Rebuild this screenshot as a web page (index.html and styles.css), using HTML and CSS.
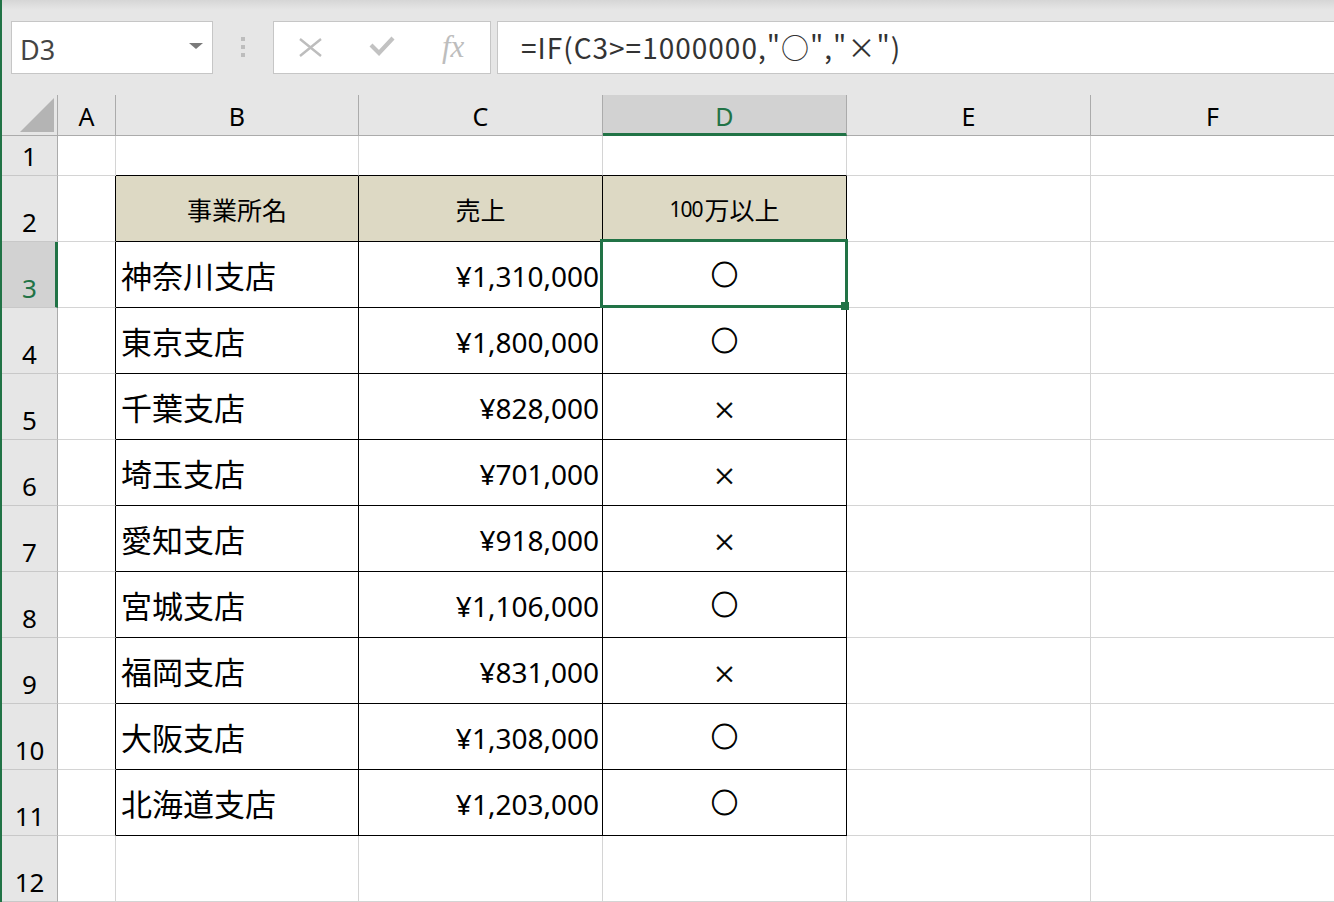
FILE: index.html
```html
<!DOCTYPE html>
<html lang="ja">
<head>
    <meta charset="UTF-8">
    <title>事業所別売上 - Excel</title>
    <link rel="stylesheet" href="styles.css">
</head>
<body>
    <div class="formula-bar">
        <div class="name-box">
            <span class="name-text">D3</span>
            <span class="name-arrow"></span>
        </div>
        <div class="grip"><span></span><span></span><span></span></div>
        <div class="fx-buttons">
            <svg class="fx-cancel" width="23" height="19" viewBox="0 0 23 19">
                <path d="M1 1 L22 18 M22 1 L1 18" stroke="#bdbdbd" stroke-width="2.4" fill="none"/>
            </svg>
            <svg class="fx-enter" width="26" height="21" viewBox="0 0 26 21">
                <path d="M2 10 L10 18 L24 3" stroke="#c2c2c2" stroke-width="4.2" fill="none"/>
            </svg>
            <span class="fx-label">fx</span>
        </div>
        <div class="formula-input">=IF(C3&gt;=1000000,"○","×")</div>
    </div>

    <div class="sheet">
        <!-- column headers -->
        <div class="corner">
            <svg width="56" height="40" viewBox="0 0 56 40"><polygon points="18,37 52,3 52,37" fill="#b4b4b4"/></svg>
        </div>
        <div class="col-head">A</div>
        <div class="col-head">B</div>
        <div class="col-head">C</div>
        <div class="col-head selected">D</div>
        <div class="col-head">E</div>
        <div class="col-head">F</div>

        <!-- row 1 -->
        <div class="row-head">1</div>
        <div class="cell"></div>
        <div class="cell top-edge"></div>
        <div class="cell top-edge"></div>
        <div class="cell top-edge"></div>
        <div class="cell"></div>
        <div class="cell"></div>

        <!-- row 2 -->
        <div class="row-head">2</div>
        <div class="cell left-edge"></div>
        <div class="tcell th">事業所名</div>
        <div class="tcell th">売上</div>
        <div class="tcell th"><span class="th-digits">100</span>万以上</div>
        <div class="cell"></div>
        <div class="cell"></div>

        <!-- row 3 -->
        <div class="row-head selected">3</div>
        <div class="cell left-edge"></div>
        <div class="tcell name">神奈川支店</div>
        <div class="tcell num">¥1,310,000</div>
        <div class="tcell mark active">○</div>
        <div class="cell"></div>
        <div class="cell"></div>

        <!-- row 4 -->
        <div class="row-head">4</div>
        <div class="cell left-edge"></div>
        <div class="tcell name">東京支店</div>
        <div class="tcell num">¥1,800,000</div>
        <div class="tcell mark">○</div>
        <div class="cell"></div>
        <div class="cell"></div>

        <!-- row 5 -->
        <div class="row-head">5</div>
        <div class="cell left-edge"></div>
        <div class="tcell name">千葉支店</div>
        <div class="tcell num">¥828,000</div>
        <div class="tcell mark cross">×</div>
        <div class="cell"></div>
        <div class="cell"></div>

        <!-- row 6 -->
        <div class="row-head">6</div>
        <div class="cell left-edge"></div>
        <div class="tcell name">埼玉支店</div>
        <div class="tcell num">¥701,000</div>
        <div class="tcell mark cross">×</div>
        <div class="cell"></div>
        <div class="cell"></div>

        <!-- row 7 -->
        <div class="row-head">7</div>
        <div class="cell left-edge"></div>
        <div class="tcell name">愛知支店</div>
        <div class="tcell num">¥918,000</div>
        <div class="tcell mark cross">×</div>
        <div class="cell"></div>
        <div class="cell"></div>

        <!-- row 8 -->
        <div class="row-head">8</div>
        <div class="cell left-edge"></div>
        <div class="tcell name">宮城支店</div>
        <div class="tcell num">¥1,106,000</div>
        <div class="tcell mark">○</div>
        <div class="cell"></div>
        <div class="cell"></div>

        <!-- row 9 -->
        <div class="row-head">9</div>
        <div class="cell left-edge"></div>
        <div class="tcell name">福岡支店</div>
        <div class="tcell num">¥831,000</div>
        <div class="tcell mark cross">×</div>
        <div class="cell"></div>
        <div class="cell"></div>

        <!-- row 10 -->
        <div class="row-head">10</div>
        <div class="cell left-edge"></div>
        <div class="tcell name">大阪支店</div>
        <div class="tcell num">¥1,308,000</div>
        <div class="tcell mark">○</div>
        <div class="cell"></div>
        <div class="cell"></div>

        <!-- row 11 -->
        <div class="row-head">11</div>
        <div class="cell left-edge"></div>
        <div class="tcell name">北海道支店</div>
        <div class="tcell num">¥1,203,000</div>
        <div class="tcell mark">○</div>
        <div class="cell"></div>
        <div class="cell"></div>

        <!-- row 12 -->
        <div class="row-head">12</div>
        <div class="cell"></div>
        <div class="cell"></div>
        <div class="cell"></div>
        <div class="cell"></div>
        <div class="cell"></div>
        <div class="cell"></div>
    </div>
</body>
</html>
```

FILE: styles.css
```css
body {
    margin: 0;
    width: 1334px;
    height: 902px;
    box-sizing: border-box;
    overflow: hidden;
    background-color: #e6e6e6;
    border-left: 2px solid #217346;
    font-family: "Noto Sans", "Noto Sans CJK JP", sans-serif;
    color: #000;
}

/* formula bar */
.formula-bar {
    display: flex;
    align-items: flex-start;
    height: 95px;
    box-sizing: border-box;
    padding: 21px 0 0 9px;
    background: linear-gradient(#d6d6d6, #e6e6e6 10px);
}

.name-box {
    display: flex;
    align-items: center;
    width: 202px;
    height: 53px;
    box-sizing: border-box;
    padding-left: 8px;
    background-color: white;
    border: 1px solid #c6c6c6;
}

.name-text {
    font-size: 27px;
    color: #444;
    padding-top: 4px;
}

.name-arrow {
    margin-left: auto;
    margin-right: 9px;
    margin-bottom: 4px;
    border-left: 7px solid transparent;
    border-right: 7px solid transparent;
    border-top: 6px solid #7a7a7a;
}

.grip {
    display: flex;
    flex-direction: column;
    align-items: center;
    gap: 4px;
    width: 60px;
    padding-top: 16px;
}

.grip span {
    width: 4px;
    height: 4px;
    background-color: #bdbdbd;
}

.fx-buttons {
    display: flex;
    align-items: center;
    gap: 47px;
    width: 218px;
    height: 53px;
    box-sizing: border-box;
    padding-left: 25px;
    background-color: white;
    border: 1px solid #c6c6c6;
}

.fx-enter {
    margin-top: -4px;
}

.fx-label {
    font-family: "Liberation Serif", serif;
    font-style: italic;
    font-size: 31px;
    color: #bdbdbd;
    margin-top: -2px;
}

.formula-input {
    flex: 1;
    height: 53px;
    box-sizing: border-box;
    margin-left: 6px;
    padding: 0 0 2px 23px;
    display: flex;
    align-items: center;
    background-color: white;
    border: 1px solid #c6c6c6;
    border-right: none;
    font-family: "Noto Sans CJK JP", sans-serif;
    font-size: 28px;
    letter-spacing: 1px;
    color: #333;
}

/* sheet grid */
.sheet {
    display: grid;
    grid-template-columns: 56px 58px 243px 244px 244px 244px 244px;
    grid-template-rows: 41px 40px repeat(11, 66px);
}

.corner {
    border-right: 1px solid #ababab;
    border-bottom: 1px solid #ababab;
}

.corner svg {
    display: block;
}

.col-head {
    display: flex;
    align-items: center;
    justify-content: center;
    border-right: 1px solid #ababab;
    border-bottom: 1px solid #ababab;
    font-size: 25px;
    padding-top: 1px;
}

.col-head.selected {
    background-color: #d2d2d2;
    color: #217346;
    border-bottom: 3px solid #217346;
    padding-top: 3px;
}

.row-head {
    display: flex;
    align-items: flex-end;
    justify-content: center;
    padding-bottom: 6px;
    border-right: 1px solid #ababab;
    border-bottom: 1px solid #c8c8c8;
    font-size: 26px;
    line-height: 1;
}

.row-head.selected {
    background-color: #d2d2d2;
    color: #217346;
    border-right: 3px solid #217346;
    padding-left: 2px;
}

.cell {
    background-color: white;
    border-right: 1px solid #d4d4d4;
    border-bottom: 1px solid #d4d4d4;
}

.cell.top-edge {
    border-bottom-color: #000;
}

.cell.left-edge {
    border-right-color: #000;
}

.tcell {
    display: flex;
    align-items: center;
    background-color: white;
    border-right: 1px solid #000;
    border-bottom: 1px solid #000;
    font-family: "Noto Sans CJK JP", sans-serif;
}

.tcell.th {
    justify-content: center;
    background-color: #ddd9c4;
    font-size: 25px;
}

.th-digits {
    font-family: "Noto Sans", sans-serif;
    font-size: 21px;
    letter-spacing: -1px;
    margin-right: 2px;
}

.tcell.name {
    font-size: 31px;
    padding: 0 0 0 5px;
}

.tcell.num {
    justify-content: flex-end;
    font-family: "Noto Sans", sans-serif;
    font-size: 28px;
    padding: 2px 3px 0 0;
}

.tcell.mark {
    justify-content: center;
    font-size: 27px;
    -webkit-text-stroke: 0.8px #000;
    padding-bottom: 2px;
}

.tcell.mark.cross {
    font-size: 24px;
    -webkit-text-stroke: 0.4px #000;
    padding: 3px 0 0;
}

/* active cell outline + fill handle */
.tcell.active {
    position: relative;
}

.tcell.active::after {
    content: "";
    position: absolute;
    top: -3px;
    left: -3px;
    right: -2px;
    bottom: -1px;
    border: 3px solid #217346;
    z-index: 2;
}

.tcell.active::before {
    content: "";
    position: absolute;
    right: -3px;
    bottom: -3px;
    width: 8px;
    height: 8px;
    background-color: #217346;
    z-index: 3;
}
```
